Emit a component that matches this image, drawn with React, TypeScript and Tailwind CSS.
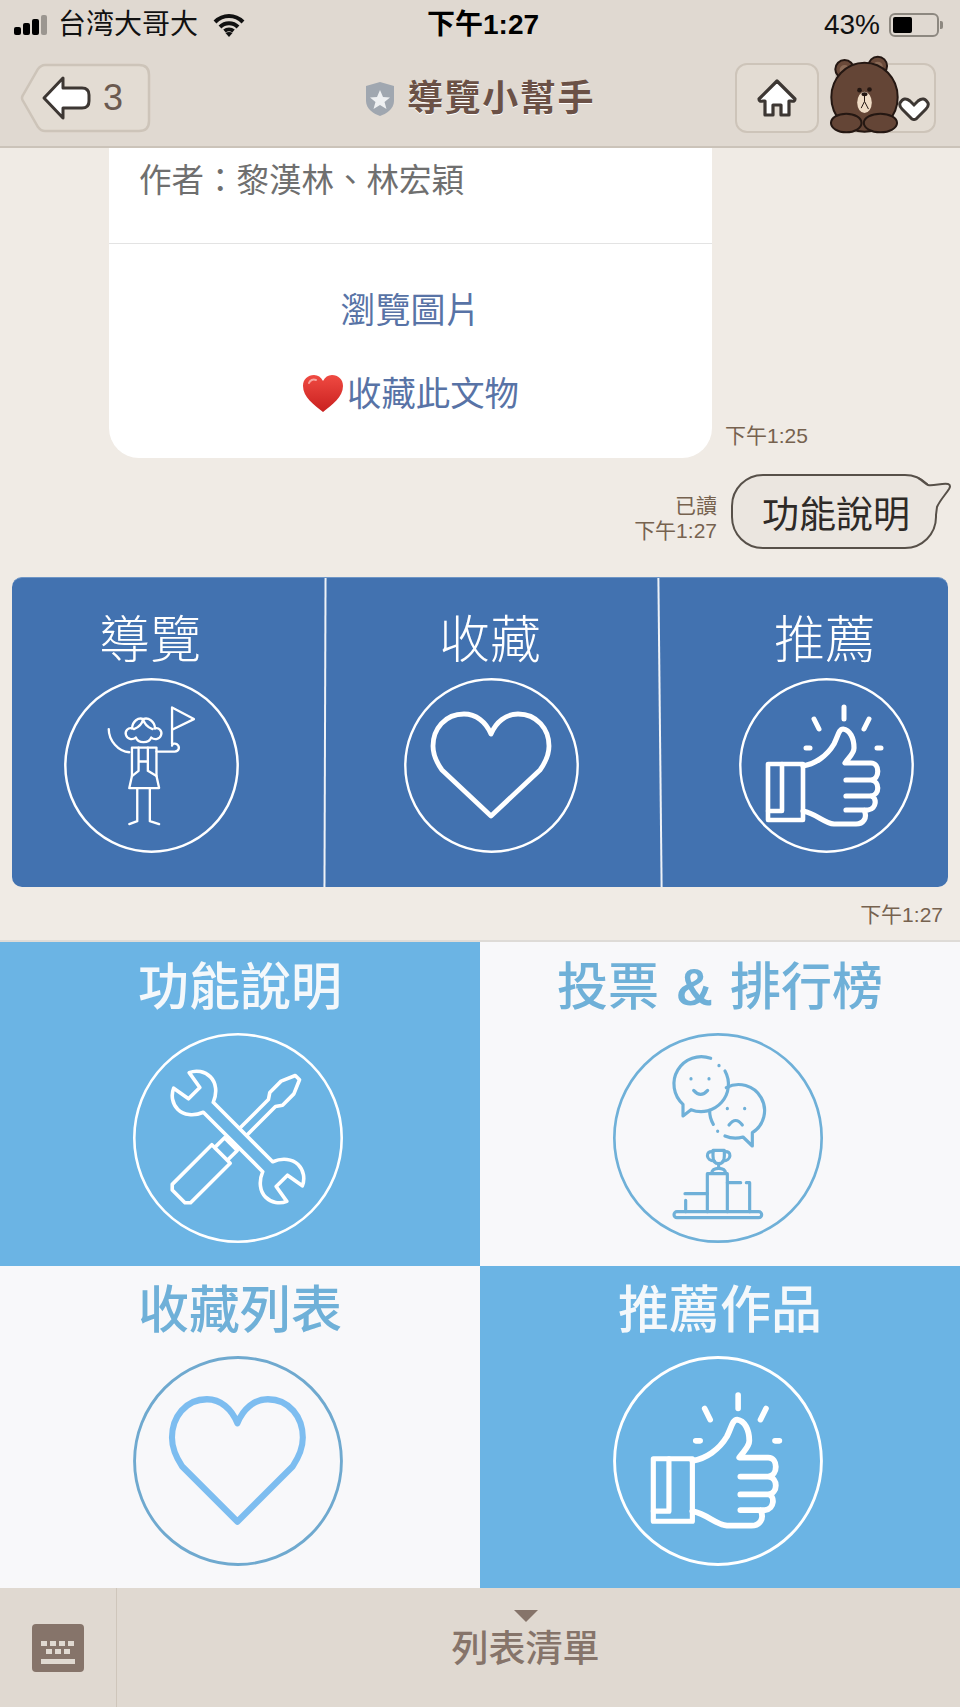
import React from 'react';

const RingHeart = ({ stroke, ring, narrow }: { stroke: string; ring: string; narrow?: boolean }) => (
  <svg viewBox="0 0 175 175" className="w-full h-full" fill="none">
    <circle cx="87.5" cy="87.5" r="86.2" stroke={ring} strokeWidth="2.4" />
    <path
      transform={narrow ? "translate(87 0) scale(0.94 1) translate(-87 0)" : undefined}
      d="M87 56 C82 44 72 36 60 36 C41 36 29 51 29 68 C29 77 33 85 38 92 L87 138 L136 92 C141 85 145 77 145 68 C145 51 133 36 114 36 C102 36 92 44 87 56 Z"
      stroke={stroke}
      strokeWidth={narrow ? 5.4 : 4.8}
      strokeLinejoin="round"
    />
  </svg>
);

const RingThumb = ({ small }: { small?: boolean }) => (
  <svg viewBox="0 0 175 175" className="w-full h-full" fill="none" stroke="#fff" strokeLinecap="round" strokeLinejoin="round">
    <circle cx="87.5" cy="87.5" r="86.2" strokeWidth="2.4" />
    <g transform={small ? "translate(88 87) scale(0.93) translate(-87.5 -87.5)" : undefined}>
      <path d="M29 86 H64 V142 H29 Z" strokeWidth="4.6" />
      <path d="M43 86 V133 M29 133 H43" strokeWidth="4.6" />
      <path d="M64 88 C76 86 88 78 95 66 C99 58 100 51 104 51 C111 52 115 60 115 70 C115 76 109 80 106 85 H132 C141 85 141 101 132 102 H107 M132 102 C141 103 141 117 132 118 H107 M132 118 C138 119 138 131 129 132 H107 M125 132 C129 140 124 146 117 146 H95 C85 145 78 136 64 133" strokeWidth="5.2" />
      <path d="M105 29 V41 M75 41 L80 51 M130 41 L125 51 M67 70 H71 M138 70 H142" strokeWidth="5" />
    </g>
  </svg>
);

const RingGuide = () => (
  <svg viewBox="11 16 528 528" className="w-full h-full" fill="none" stroke="#fff" strokeLinecap="round" strokeLinejoin="round">
    <circle cx="275" cy="280" r="260" strokeWidth="7.5" />
    <g strokeWidth="7">
      <path d="M337 215 V105 L403 140 L337 172" />
      <path d="M290 238 H345 C358 238 362 224 352 216 C346 212 338 214 337 220" />
      <path d="M146 170 C146 205 175 238 208 240" />
      <path d="M216 168 C218 146 235 134 250 140 C265 134 284 146 286 168 M250 140 C246 158 234 166 222 170 M250 140 C254 158 266 166 278 170" />
      <path d="M218 168 C204 164 194 176 198 188 C202 200 216 204 228 196 M284 168 C298 164 308 176 304 188 C300 200 286 204 274 196" />
      <path d="M228 196 C234 214 268 214 274 196" />
      <path d="M208 348 H298 L290 312 V226 H216 V312 Z" />
      <path d="M236 226 V296 M264 226 V296 M236 268 H264 M216 312 L236 296 M290 312 L264 296" />
      <path d="M232 348 V448 L208 457 M270 348 V448 L298 457" />
    </g>
  </svg>
);

const RingTools = () => (
  <svg viewBox="0 0 210 210" className="w-full h-full" fill="none" stroke="#fff" strokeLinejoin="round">
    <circle cx="105" cy="105" r="103.7" strokeWidth="2.6" />
    <g transform="translate(105 104) rotate(45)" strokeWidth="3.6">
      <path d="M-5 10 V-48 L-9 -54 V-70 L-3 -84 H3 L9 -70 V-54 L5 -48 V10" />
      <path d="M-9 10 H9 V24 H-9 Z M-13 24 H13 V80 L9 84 H-9 L-13 80 Z" />
    </g>
    <path
      transform="translate(105 104) rotate(-45)"
      d="M-7 -42 C-17 -46 -23 -54 -23 -62 C-23 -70 -18 -77 -11 -80 L-8 -62 L8 -62 L11 -80 C18 -77 23 -70 23 -62 C23 -54 17 -46 7 -42 L7 42 C17 46 23 54 23 62 C23 70 18 77 11 80 L8 62 L-8 62 L-11 80 C-18 77 -23 70 -23 62 C-23 54 -17 46 -7 42 Z"
      fill="#6bb4e4"
      strokeWidth="3.6"
    />
  </svg>
);

const RingVote = () => (
  <svg viewBox="-18 36 630 630" className="w-full h-full" fill="none" stroke="#6fb0d8" strokeLinecap="round" strokeLinejoin="round">
    <circle cx="297" cy="351" r="311" strokeWidth="8" />
    <g strokeWidth="9.5">
      <path d="M275 112 A82 82 0 0 0 192 250 L192 285 L216 266 A82 82 0 0 0 318 150" />
      <path d="M300 133 V134 M296 330 V331" />
      <path d="M322 200 A78 78 0 0 1 400 335 L400 375 L372 348 A78 78 0 0 1 318 345" />
      <path d="M283 310 A78 78 0 0 1 272 268" />
      <path d="M216 173 V174 M270 173 V174 M325 262 V263 M377 262 V263" />
      <path d="M224 208 Q245 232 266 208 M330 312 Q350 285 370 312" />
      <path d="M282 388 H316 V405 Q316 428 299 428 Q282 428 282 405 Z" />
      <path d="M282 392 C258 388 260 420 286 420 M316 392 C340 388 338 420 312 420" />
      <path d="M299 428 V442 M278 456 Q280 442 299 442 Q318 442 320 456" />
      <path d="M265 572 V458 H325 V572" />
      <path d="M200 572 V538 M198 518 H265 M325 485 H365 M382 485 H392 V572" />
      <rect x="165" y="572" width="263" height="18" rx="9" />
    </g>
  </svg>
);

const Bear = () => (
  <svg viewBox="320 40 220 245" className="w-full h-full" stroke="#241712" strokeWidth="6">
    <circle cx="370" cy="88" r="28" fill="#6a4a3a" />
    <circle cx="470" cy="78" r="28" fill="#6a4a3a" />
    <circle cx="370" cy="90" r="15" fill="#8a6a56" stroke="none" />
    <circle cx="470" cy="80" r="15" fill="#8a6a56" stroke="none" />
    <ellipse cx="430" cy="172" rx="100" ry="104" fill="#644536" />
    <ellipse cx="375" cy="250" rx="46" ry="28" fill="#644536" />
    <ellipse cx="478" cy="250" rx="50" ry="28" fill="#644536" />
    <ellipse cx="430" cy="188" rx="22" ry="32" fill="#efdcc6" stroke="none" />
    <ellipse cx="430" cy="163" rx="9" ry="6" fill="#241712" stroke="none" />
    <circle cx="415" cy="151" r="7" fill="#241712" stroke="none" />
    <circle cx="445" cy="149" r="7" fill="#241712" stroke="none" />
    <path d="M430 168 V185 M430 185 L420 205 M430 185 L442 208" fill="none" strokeWidth="3" />
  </svg>
);

const MenuCol = ({ label, offset, children }: any) => (
  <div className={"flex flex-col w-[175px] items-center pt-[37px] " + offset}>
    <div className="text-[51px] leading-none font-light text-white mr-[3px]">{label}</div>
    <div className="w-[175px] h-[175px] mt-[12px]">{children}</div>
  </div>
);

const GridCell = ({ label, blue, pad, children }: any) => (
  <div className={"w-[480px] flex flex-col items-center " + pad + " " + (blue ? "bg-[#6bb4e4] text-[#f4f8fb]" : "bg-[#f8f8fa] text-[#6fb0d8]")}>
    <div className="text-[51px] leading-none font-medium [word-spacing:3px]">{label}</div>
    <div className="w-[210px] h-[210px] mt-[20px] mr-[4px]">{children}</div>
  </div>
);

export default function App() {
  return (
    <div className="w-[960px] h-[1707px] flex flex-col overflow-hidden bg-[#f0ebe5] font-['Liberation_Sans','Noto_Sans_CJK_TC',sans-serif]">
      {/* status bar */}
      <div className="h-[50px] bg-[#e0d9d1] flex items-center pl-[14px] pr-[17px] text-[#111] text-[28px]">
        <div className="flex-1 flex items-center">
          <div className="flex items-end gap-[2px] h-[20px]">
            <div className="w-[7px] h-[8px] bg-black rounded-[2px]" />
            <div className="w-[7px] h-[12px] bg-black rounded-[2px]" />
            <div className="w-[7px] h-[16px] bg-black rounded-[2px]" />
            <div className="w-[6px] h-[20px] bg-[#9b9690] rounded-[2px]" />
          </div>
          <span className="ml-[11px]">台湾大哥大</span>
          <svg viewBox="0 0 32 24" className="w-[32px] h-[24px] ml-[15px]" fill="none" stroke="#111" strokeWidth="4">
            <path d="M2 9 C10 1 22 1 30 9 M7 14 C12 9 20 9 25 14 M11.5 18 C14 16 18 16 20.5 18" />
            <path d="M16 24 L12.5 20 C14.5 18.6 17.5 18.6 19.5 20 Z" fill="#111" stroke="none" />
          </svg>
        </div>
        <div className="font-semibold text-[28px] text-black ml-[9px]">下午1:27</div>
        <div className="flex-1 flex items-center justify-end">
          <span>43%</span>
          <div className="ml-[9px] w-[50px] h-[24px] border-2 border-[#8d8880] rounded-[6px] p-[2px]">
            <div className="w-[19px] h-full bg-black rounded-[2px]" />
          </div>
          <div className="w-[3px] h-[8px] bg-[#8d8880] ml-[1px] rounded-r-[2px]" />
        </div>
      </div>

      {/* header */}
      <div className="h-[98px] bg-[#e0d9d1] border-b-2 border-[#cbc3b9] flex items-start pt-[13px]">
        <div className="flex-1 pl-[20px]">
          <div className="relative w-[131px] h-[70px]">
            <svg viewBox="0 0 131 70" className="absolute inset-0 w-full h-full">
              <path d="M25 2 H119 Q129 2 129 12 V58 Q129 68 119 68 H25 Q21 68 18 64 L3 38 Q1 35 3 32 L18 6 Q21 2 25 2 Z" fill="#e3dcd3" stroke="#cdc4b9" strokeWidth="2.5" />
              <path d="M24 35 L43 15 V25 H62 Q69 25 69 32 V38 Q69 45 62 45 H43 V55 Z" fill="#fff" stroke="#3d3733" strokeWidth="3" strokeLinejoin="round" />
            </svg>
            <span className="absolute left-[83px] top-[13px] text-[36px] leading-[44px] text-[#6b5a50]">3</span>
          </div>
        </div>
        <div className="flex items-center h-[70px] pt-[1px] ml-[4px]">
          <svg viewBox="0 0 30 36" className="w-[30px] h-[36px]">
            <path d="M15 1 L29 5 V20 C29 28 21 33 15 35 C9 33 1 28 1 20 V5 Z" fill="#a0a7b0" />
            <path d="M15 9 L18 16 L25 16.5 L19.5 21 L21.5 28 L15 24 L8.5 28 L10.5 21 L5 16.5 L12 16 Z" fill="#eef0f2" />
          </svg>
          <span className="ml-[12px] text-[36px] leading-none font-bold text-[#6b5146] tracking-[1.6px] [text-shadow:0_1px_0_#fff]">導覽小幫手</span>
        </div>
        <div className="flex-1 flex justify-end pr-[24px] gap-[16px]">
          <div className="w-[84px] h-[70px] bg-[#e3dcd3] border-2 border-[#cdc4b9] rounded-[12px] flex items-center justify-center">
            <svg viewBox="0 0 40 38" className="w-[40px] h-[38px]" strokeLinejoin="round">
              <path d="M20 2 L38 20 Q38 23 34 22 H32 V36 H24 V26 H16 V36 H8 V22 H6 Q2 23 2 20 Z" fill="#fff" stroke="#3d3733" strokeWidth="3.2" />
            </svg>
          </div>
          <div className="relative w-[101px] h-[70px] bg-[#e3dcd3] border-2 border-[#cdc4b9] rounded-[12px]">
            <div className="absolute left-[-9px] top-[-12px] w-[73px] h-[82px]">
              <Bear />
            </div>
            <svg viewBox="0 0 34 26" className="absolute left-[60px] top-[30px] w-[34px] h-[26px]">
              <path d="M3 8 Q7 1 13 6 L17 10 L21 6 Q27 1 31 8 Q32 11 29 14 L19 24 Q17 25 15 24 L5 14 Q2 11 3 8 Z" fill="#fff" stroke="#3d3733" strokeWidth="3" />
            </svg>
          </div>
        </div>
      </div>

      {/* chat */}
      <div className="h-[794px] border-b-2 border-[#dedbd7]">
        <div className="flex items-end pl-[109px]">
          <div className="w-[603px] h-[310px] bg-white rounded-b-[30px] flex flex-col">
            <div className="h-[96px] border-b border-[#e3e3e3] pl-[30px] pt-[13px] text-[32.5px] leading-[40px] text-[#6f6f6f]">作者：黎漢林、林宏穎</div>
            <div className="flex flex-col items-center text-[35px] text-[#5873a6] leading-[44px] pt-[45px]">
              <div>瀏覽圖片</div>
              <div className="flex items-center mt-[39px] text-[34.4px]">
                <svg viewBox="0 0 42 40" className="w-[42px] h-[40px] mr-[3px]">
                  <defs>
                    <linearGradient id="heartFill" x1="0" y1="0" x2="0" y2="1">
                      <stop offset="0" stopColor="#ef4a42" />
                      <stop offset="1" stopColor="#c9201f" />
                    </linearGradient>
                  </defs>
                  <path d="M21 38 C12 31 1 23 1 12 C1 5 6 1 12 1 C16 1 19 3 21 7 C23 3 26 1 30 1 C36 1 41 5 41 12 C41 23 30 31 21 38 Z" fill="url(#heartFill)" />
                  <path d="M7 9 C8 6 11 5 14 6" fill="none" stroke="#f7a5a0" strokeWidth="2" strokeLinecap="round" />
                </svg>
                <span>收藏此文物</span>
              </div>
            </div>
          </div>
          <div className="ml-[13px] mb-[10px] text-[21px] leading-[24px] text-[#76624f]">下午1:25</div>
        </div>

        <div className="flex justify-end items-center mt-[16px] pr-[23px] gap-[14px]">
          <div className="flex flex-col items-end text-[21px] leading-[25px] text-[#76624f] pt-[12px]">
            <div>已讀</div>
            <div>下午1:27</div>
          </div>
          <div className="relative w-[206px] h-[75px] bg-[#ebe6e0] border-2 border-[#575049] rounded-[32px] flex items-center justify-center text-[37px] text-[#2e2a27] pt-[8px] pl-[4px]">
            <svg viewBox="0 0 34 40" className="absolute right-[-17px] top-[1px] w-[34px] h-[40px]">
              <path d="M0 1 C4 3 7 7 10 8 C16 9 24 6 30 7 C33 8 32 10 31 12 C28 17 22 23 19 30 L18 38 L0 38 Z" fill="#ebe6e0" />
              <path d="M0 1 C4 3 7 7 10 8 C16 9 24 6 30 7 C33 8 32 10 31 12 C28 17 22 23 19 30 L18 38" fill="none" stroke="#575049" strokeWidth="2" />
            </svg>
            <span className="relative">功能說明</span>
          </div>
        </div>

        <div className="relative mt-[28px] mx-[12px] h-[310px] bg-[#4272b0] rounded-[10px] flex border-t border-[#6f96c6]">
          <div className="absolute left-[312px] top-0 h-full w-[2px] bg-[#eef2f7] rotate-[0.2deg]" />
          <div className="absolute left-[647px] top-0 h-full w-[2px] bg-[#eef2f7] -rotate-[0.6deg]" />
          <MenuCol label="導覽" offset="ml-[52px]"><RingGuide /></MenuCol>
          <MenuCol label="收藏" offset="ml-[165px]"><RingHeart stroke="#fff" ring="#fff" /></MenuCol>
          <MenuCol label="推薦" offset="ml-[160px]"><RingThumb /></MenuCol>
        </div>
        <div className="mt-[16px] pr-[17px] text-right text-[21px] leading-[24px] text-[#76624f]">下午1:27</div>
      </div>

      {/* rich menu */}
      <div className="flex h-[324px]">
        <GridCell label="功能說明" blue pad="pt-[20px]"><RingTools /></GridCell>
        <GridCell label={<>投票 <span className="font-bold">&amp;</span> 排行榜</>} pad="pt-[20px]"><RingVote /></GridCell>
      </div>
      <div className="flex h-[322px]">
        <GridCell label="收藏列表" pad="pt-[19px]">
          <RingHeart stroke="#7dbdf0" ring="#6fa9cf" narrow />
        </GridCell>
        <GridCell label="推薦作品" blue pad="pt-[19px]"><RingThumb small /></GridCell>
      </div>

      {/* bottom bar */}
      <div className="flex-1 bg-[#e0d9d1] flex">
        <div className="w-[117px] border-r border-[#cfc6bb] flex items-center justify-center pr-[1px]">
          <div className="w-[52px] h-[48px] bg-[#86746a] rounded-[4px] flex flex-col items-center justify-end pb-[8px]">
            <div className="flex gap-[3px]">
              <div className="w-[6px] h-[5px] bg-[#e0d9d1]" />
              <div className="w-[6px] h-[5px] bg-[#e0d9d1]" />
              <div className="w-[6px] h-[5px] bg-[#e0d9d1]" />
              <div className="w-[6px] h-[5px] bg-[#e0d9d1]" />
            </div>
            <div className="flex gap-[3px] mt-[3px]">
              <div className="w-[6px] h-[5px] bg-[#e0d9d1]" />
              <div className="w-[6px] h-[5px] bg-[#e0d9d1]" />
              <div className="w-[6px] h-[5px] bg-[#e0d9d1]" />
            </div>
            <div className="w-[34px] h-[5px] bg-[#e0d9d1] mt-[5px]" />
          </div>
        </div>
        <div className="flex-1 flex flex-col items-center pt-[22px] pr-[26px]">
          <div className="w-0 h-0 border-x-[12px] border-x-transparent border-t-[12px] border-t-[#86746a]" />
          <div className="mt-[8px] text-[37px] leading-[40px] text-[#86746a] font-medium">列表清單</div>
        </div>
      </div>
    </div>
  );
}
